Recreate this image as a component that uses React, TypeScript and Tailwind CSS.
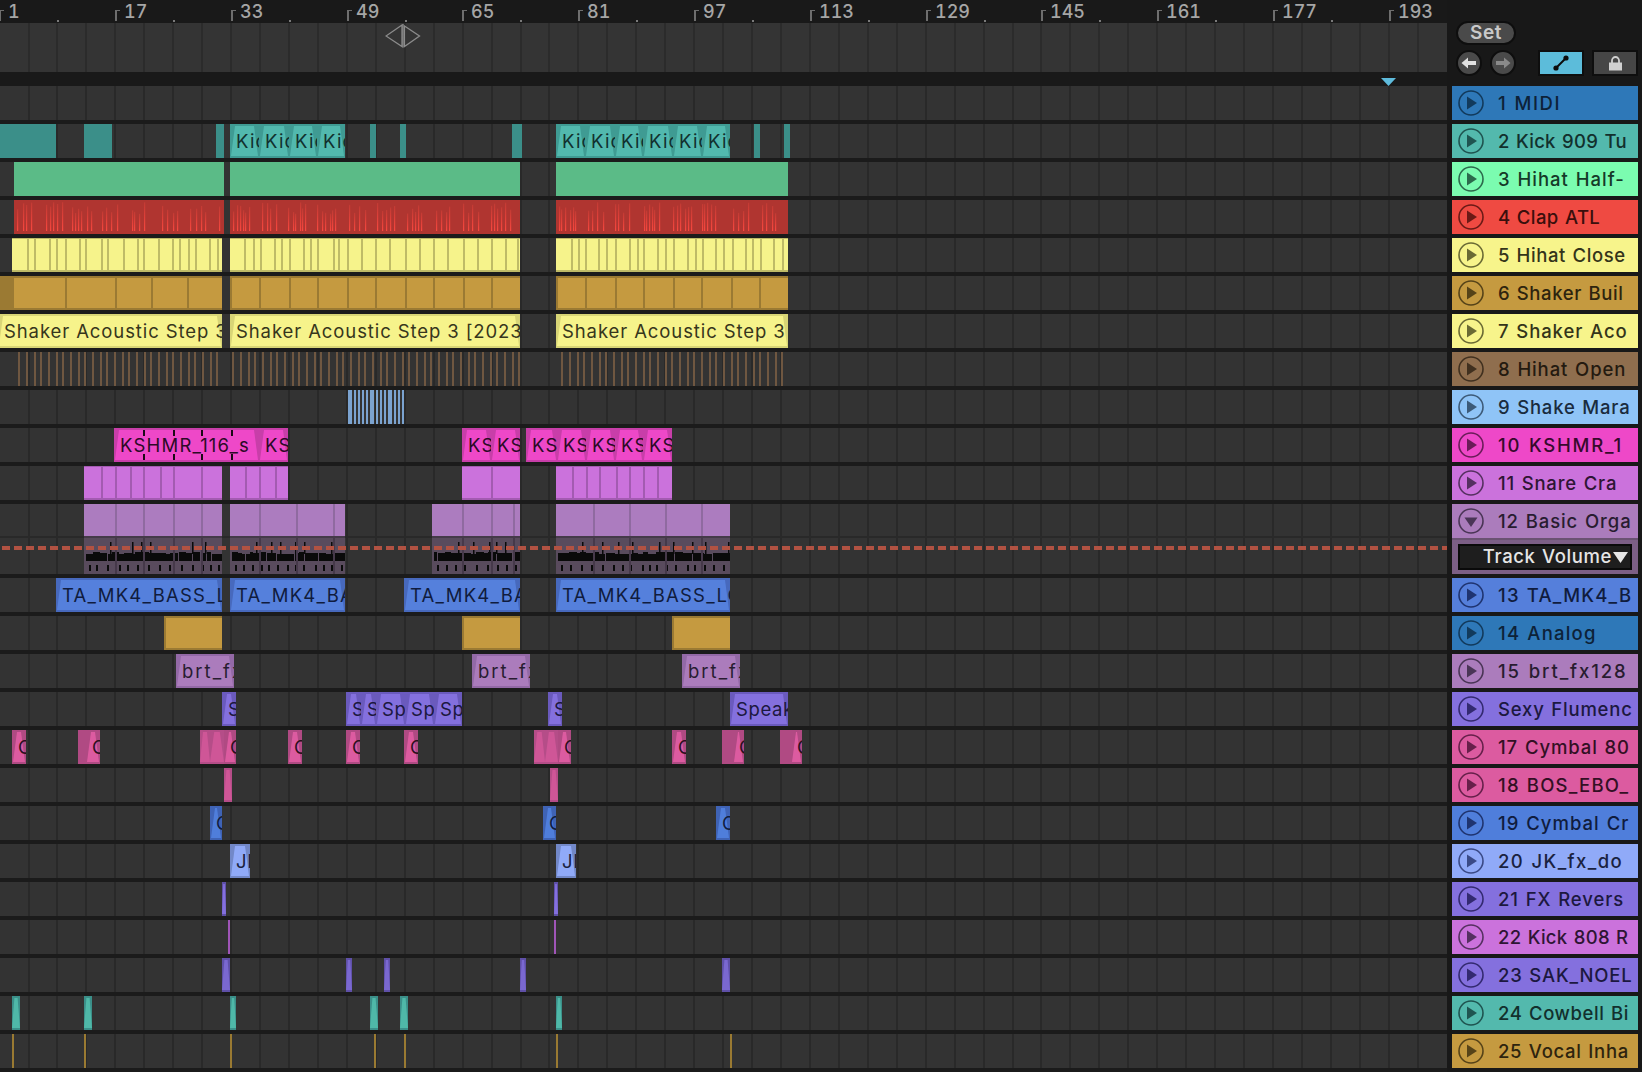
import React from "react";

const z = (v: number) => v / 2.851;
const y7 = (v: number) => 420 + v / 3;
const s6 = (v: number) => 500 + v / 3;

type Clip = {
  l: number;
  r: number;
  base: string;
  light?: string;
  narrow?: boolean;
  text?: string;
  ink?: string;
  tr?: string;
  divs?: number[];
  divCls?: string;
  frame?: string;
  ticks?: number[];
  dark?: number;
  darkCls?: string;
  spikes?: boolean;
};

const gridXs = Array.from({ length: 50 }, (_, k) => Math.round(-1.4 + k * 28.94)).filter((x) => x >= 0 && x < 1446);

function rng(seed: number) {
  let a = seed;
  return () => {
    a = (a + 0x6d2b79f5) | 0;
    let t = Math.imul(a ^ (a >>> 15), 1 | a);
    t = (t + Math.imul(t ^ (t >>> 7), 61 | t)) ^ t;
    return ((t ^ (t >>> 14)) >>> 0) / 4294967296;
  };
}

function Grid({ thin }: { thin?: boolean }) {
  return (
    <>
      {gridXs.map((x) => (
        <div
          key={x}
          className={thin ? "absolute inset-y-0 w-[2px] bg-[#2b2b2b]" : "absolute inset-y-0 w-[2px] bg-[#292929]"}
          style={{ left: x }}
        />
      ))}
    </>
  );
}

function Spikes({ w, seed }: { w: number; seed: number }) {
  const r = rng(seed);
  const items: { x: number; top: number }[] = [];
  let x = 3;
  while (x < w - 2) {
    const pos = x % 29;
    if (pos < 20) items.push({ x, top: 2 + r() * 12 });
    x += 2 + Math.round(r() * 4);
  }
  return (
    <svg className="absolute inset-0" width={w} height={34}>
      <defs>
        <linearGradient id={`sp${seed}`} x1="0" y1="0" x2="0" y2="1">
          <stop offset="0" stopColor="#c23b34" />
          <stop offset="0.45" stopColor="#dc3f38" />
          <stop offset="1" stopColor="#f8483f" />
        </linearGradient>
      </defs>
      {items.map((it, i) => (
        <rect key={i} x={it.x} y={it.top} width={1.2} height={31 - it.top} fill={`url(#sp${seed})`} />
      ))}
    </svg>
  );
}

function ClipView({ c, i }: { c: Clip; i: number }) {
  const left = Math.round(c.l);
  const width = Math.max(1, Math.round(c.r) - left);
  return (
    <div className={`absolute inset-y-0 overflow-hidden ${c.base}`} style={{ left, width }}>
      {c.light && (
        <div
          className={`absolute inset-x-0 top-[2px] bottom-[2px] ${c.light} ${
            c.narrow
              ? "[clip-path:polygon(30%_0,70%_0,100%_100%,0_100%)]"
              : "[clip-path:polygon(5px_0,calc(100%-5px)_0,calc(100%-1px)_100%,1px_100%)]"
          }`}
        />
      )}
      {c.dark !== undefined && <div className={`absolute inset-y-0 left-0 ${c.darkCls}`} style={{ width: c.dark }} />}
      {c.spikes && <Spikes w={width} seed={i * 37 + 11} />}
      {c.divs?.map((d, k) => (
        <div key={k} className={`absolute inset-y-0 w-[2px] ${c.divCls}`} style={{ left: Math.round(d) - left }} />
      ))}
      {c.frame && <div className={`absolute inset-0 ${c.frame}`} />}
      {c.ticks?.map((d, k) => (
        <React.Fragment key={k}>
          <div className="absolute top-[2px] h-[6px] w-[2px] bg-[#1a0a16]" style={{ left: Math.round(d) - left }} />
          <div className="absolute top-[26px] h-[6px] w-[2px] bg-[#1a0a16]" style={{ left: Math.round(d) - left }} />
        </React.Fragment>
      ))}
      {c.text && (
        <span
          className={`absolute left-[6px] right-0 top-0 overflow-hidden text-[18.5px] leading-[34px] whitespace-nowrap ${
            c.tr ?? "tracking-[0.6px]"
          } ${c.ink ?? "text-[#1e1e2a]"}`}
        >
          {c.text}
        </span>
      )}
    </div>
  );
}

const sec = (a: [number, number][], o: Partial<Clip> & { base: string }): Clip[] =>
  a.map(([l, r]) => ({ l, r, ...o }));

const three: [number, number][] = [
  [z(40), z(639)],
  [z(656), z(1482)],
  [556, 788],
];

const kickDark = "bg-[#3b8f89]";
const kick = { base: "bg-[#3f9b93]", light: "bg-[#52b9ae]", text: "Kick 909", ink: "text-[#11302e]", tr: "tracking-[1.2px]" };
const ks = { base: "bg-[#c83ea9]", light: "bg-[#ee48c8]", text: "KSHMR_116_s", ink: "text-[#2c0a26]", tr: "tracking-[1.2px]" };
const hihatOpen: [number, number][] = [];
for (const [a, b] of [
  [18, 222],
  [232, 520],
  [561, 790],
] as [number, number][]) {
  let x = a;
  let k = 0;
  while (x < b - 1) {
    hihatOpen.push([x, x + 2]);
    x += [8, 8, 6][k % 3];
    k++;
  }
}
const mara: [number, number][] = [
  [54, 66],
  [72, 78],
  [84, 90],
  [96, 102],
  [108, 114],
  [120, 132],
  [138, 144],
  [150, 156],
  [162, 168],
  [174, 186],
  [192, 198],
  [204, 210],
  [216, 222],
].map(([a, b]) => [330 + a / 3, 330 + b / 3]);

const yDivs1 = [76, 98, 140, 160, 185, 225, 243, 287, 305, 350, 392, 408, 450, 490, 510, 535, 555, 595, 620].map(z);
const yDivs2 = [
  695, 720, 740, 780, 800, 825, 865, 885, 905, 950, 965, 990, 1030, 1070, 1110, 1155, 1195, 1235, 1275, 1320, 1360,
  1400, 1440, 1475,
].map(z);
const yDivs3 = [
  212, 235, 255, 295, 318, 345, 388, 410, 428, 470, 495, 520, 560, 585, 605, 645, 668, 695, 735, 755, 780, 820, 845,
].map(s6);
const oDivs1 = [185, 328, 430, 533].map(z);
const oDivs2 = [738, 823, 904, 988, 1068, 1155, 1235, 1320, 1400].map(z);
const oDivs3 = [255, 345, 430, 520, 603, 693, 777].map(s6);

const yellow = {
  base: "bg-[#f6f38b]",
  divCls: "bg-[#bfbb67]",
  frame: "border-t border-b-2 border-[#bfbb67]",
};
const orange = {
  base: "bg-[#c59a40]",
  divCls: "bg-[#9b7a33]",
  frame: "border-t-2 border-b-2 border-[#9b7a33]",
};
const shaker = {
  base: "bg-[#d8d576]",
  light: "bg-[#f6f38b]",
  text: "Shaker Acoustic Step 3 [2023-01]",
  ink: "text-[#36361c]",
  tr: "tracking-[0.9px]",
};
const violet = { base: "bg-[#cb72dc]", divCls: "bg-[#a35bb1]", frame: "border-t border-b-2 border-[#a35bb1]" };
const blue = {
  base: "bg-[#4769bd]",
  light: "bg-[#5580dc]",
  text: "TA_MK4_BASS_LOOP",
  ink: "text-[#101c3e]",
  tr: "tracking-[1.2px]",
};
const gold = { base: "bg-[#c59a40]", frame: "border-2 border-r-0 border-[#9b7a33]" };
const brt = { base: "bg-[#9369a6]", light: "bg-[#ab7cbc]", text: "brt_fx128", ink: "text-[#281c30]", tr: "tracking-[2px]" };
const speak = { base: "bg-[#6a5abd]", light: "bg-[#8470de]", text: "Speak", ink: "text-[#1c1840]" };
const cym = { base: "bg-[#b04a83]", light: "bg-[#dc5ba0]", text: "Cymbal", ink: "text-[#2c0f20]" };
const cymB = { base: "bg-[#b54d88]", light: "bg-[#cf5697]", narrow: true };
const rowsData: Record<number, Clip[]> = {
  2: [
    ...sec(
      [
        [0, z(160)],
        [z(239), z(319)],
        [z(616), z(639)],
        [z(1055), z(1072)],
        [z(1140), z(1157)],
        [z(1460), z(1488)],
        [754, 760],
        [784, 790],
      ],
      { base: kickDark }
    ),
    ...sec(
      [
        [z(656), z(738)],
        [z(738), z(823)],
        [z(823), z(905)],
        [z(905), z(985)],
        [s6(168), s6(255)],
        [s6(255), s6(345)],
        [s6(345), s6(430)],
        [s6(430), s6(520)],
        [s6(520), s6(605)],
        [s6(605), s6(690)],
      ],
      kick
    ),
  ],
  3: sec(three, { base: "bg-[#5bbb87]" }),
  4: sec(three, { base: "bg-[#b03530]", spikes: true }),
  5: [
    { l: z(34), r: z(633), ...yellow, divs: yDivs1 },
    { l: z(656), r: z(1482), ...yellow, divs: yDivs2 },
    { l: 556, r: 788, ...yellow, divs: yDivs3 },
  ],
  6: [
    { l: 0, r: z(633), ...orange, divs: oDivs1, dark: 14, darkCls: "bg-[#9b7a33]" },
    { l: z(656), r: z(1482), ...orange, divs: oDivs2, frame: "border-2 border-r-0 border-[#9b7a33]" },
    { l: 556, r: 788, ...orange, divs: oDivs3, frame: "border-2 border-r-0 border-[#9b7a33]" },
  ],
  7: sec(
    [
      [-2, z(633)],
      [z(656), z(1482)],
      [556, 788],
    ],
    shaker
  ),
  8: sec(hihatOpen, { base: "bg-[#6f5741]" }),
  9: sec(mara, { base: "bg-[#7ba3d0]" }),
  10: [
    { l: z(325), r: z(738), ...ks, ticks: [408, 493, 573, 658].map(z) },
    ...sec(
      [
        [z(738), z(820)],
        [y7(126), y7(213)],
        [y7(213), y7(300)],
        [y7(318), y7(410)],
        [y7(410), y7(497)],
        [y7(497), y7(585)],
        [y7(585), y7(670)],
        [y7(670), y7(756)],
      ],
      ks
    ),
  ],
  11: [
    { l: z(239), r: z(633), ...violet, divs: [287, 328, 370, 408, 455, 493, 573].map(z) },
    { l: z(656), r: z(820), ...violet, divs: [698, 738, 783].map(z) },
    { l: y7(126), r: y7(300), ...violet, divs: [y7(213)] },
    { l: y7(408), r: y7(756), ...violet, divs: [455, 497, 538, 587, 628, 670, 712].map(y7) },
  ],
  13: sec(
    [
      [z(160), z(633)],
      [z(656), z(985)],
      [z(1152), z(1482)],
      [556, 730],
    ],
    blue
  ),
  14: sec(
    [
      [z(468), z(633)],
      [z(1317), z(1482)],
      [672, 730],
    ],
    gold
  ),
  15: sec(
    [
      [z(502), z(667)],
      [z(1346), z(1510)],
      [682, 740],
    ],
    brt
  ),
  16: sec(
    [
      [z(633), z(673)],
      [z(986), z(1030)],
      [z(1030), z(1071)],
      [z(1071), z(1155)],
      [z(1155), z(1236)],
      [z(1236), z(1317)],
      [548, 562],
      [730, 788],
    ],
    speak
  ),
  17: [
    ...sec(
      [
        [z(34), z(74)],
        [z(245), z(285)],
        [z(638), z(673)],
        [z(821), z(861)],
        [z(986), z(1026)],
        [z(1152), z(1192)],
        [558, 571],
        [672, 686],
        [733, 744],
        [791, 802],
      ],
      cym
    ),
    ...sec(
      [
        [z(222), z(245)],
        [722, 733],
        [780, 791],
      ],
      { base: "bg-[#b04a83]" }
    ),
    ...sec(
      [
        [z(570), z(598)],
        [z(598), z(638)],
        [534, 545],
        [545, 558],
      ],
      cymB
    ),
  ],
  18: sec(
    [
      [z(639), z(661)],
      [550, 558],
    ],
    cymB
  ),
  19: sec(
    [
      [z(599), z(633)],
      [543, 556],
      [716, 730],
    ],
    { base: "bg-[#3f63b5]", light: "bg-[#4f7edb]", text: "Cymbal", ink: "text-[#101c3e]" }
  ),
  20: sec(
    [
      [z(656), z(713)],
      [556, 576],
    ],
    { base: "bg-[#7288c8]", light: "bg-[#90aaf8]", text: "JK_fx", ink: "text-[#1a2240]" }
  ),
  21: sec(
    [
      [z(633), z(644)],
      [554, 558],
    ],
    { base: "bg-[#5f50a8]", light: "bg-[#8470de]", narrow: true }
  ),
  22: sec(
    [
      [z(650), z(656)],
      [554, 556],
    ],
    { base: "bg-[#a055b8]" }
  ),
  23: sec(
    [
      [z(633), z(656)],
      [z(986), z(1003)],
      [z(1095), z(1112)],
      [z(1482), z(1500)],
      [722, 730],
    ],
    { base: "bg-[#5f50a8]", light: "bg-[#7a68d0]", narrow: true }
  ),
  24: sec(
    [
      [z(34), z(57)],
      [z(239), z(262)],
      [z(656), z(673)],
      [z(1055), z(1078)],
      [z(1140), z(1163)],
      [556, 562],
    ],
    { base: "bg-[#3b8f89]", light: "bg-[#4fb8a8]", narrow: true }
  ),
  25: sec(
    [
      [z(34), z(40)],
      [z(239), z(245)],
      [z(656), z(661)],
      [z(1066), z(1072)],
      [z(1152), z(1157)],
      [556, 558],
      [730, 732],
    ],
    { base: "bg-[#9a7a32]" }
  ),
};

const tracks: { name: string; cls: string; ink: string; icon: string; tr?: string }[] = [
  { name: "1 MIDI", cls: "bg-[#2e78b8]", ink: "text-[#0d2238]", icon: "#123a5c", tr: "tracking-[1.5px]" },
  { name: "2 Kick 909 Tu", cls: "bg-[#53b9ad]", ink: "text-[#12302d]", icon: "#1f5450", tr: "tracking-[0.3px]" },
  { name: "3 Hihat Half-", cls: "bg-[#7bfcb0]", ink: "text-[#153a28]", icon: "#2c6a4c", tr: "tracking-[1px]" },
  { name: "4 Clap ATL", cls: "bg-[#ef4a42]", ink: "text-[#3a0f0c]", icon: "#6b1a16", tr: "tracking-[0.4px]" },
  { name: "5 Hihat Close", cls: "bg-[#f7f48b]", ink: "text-[#34341a]", icon: "#6a6a34" },
  { name: "6 Shaker Buil", cls: "bg-[#c59a40]", ink: "text-[#2e240e]", icon: "#564318" },
  { name: "7 Shaker Aco", cls: "bg-[#f7f48b]", ink: "text-[#34341a]", icon: "#6a6a34", tr: "tracking-[0.9px]" },
  { name: "8 Hihat Open", cls: "bg-[#8f6e4e]", ink: "text-[#241a10]", icon: "#40301f", tr: "tracking-[0.9px]" },
  { name: "9 Shake Mara", cls: "bg-[#8fc4f7]", ink: "text-[#1a2c3e]", icon: "#3c5a78", tr: "tracking-[0.8px]" },
  { name: "10 KSHMR_1", cls: "bg-[#ee48c8]", ink: "text-[#360a2c]", icon: "#6a1c58", tr: "tracking-[1.8px]" },
  { name: "11 Snare Cra", cls: "bg-[#cb72dc]", ink: "text-[#2e1534]", icon: "#553060", tr: "tracking-[0.8px]" },
  { name: "12 Basic Orga", cls: "bg-[#ab7cbc]", ink: "text-[#281c30]", icon: "#4a3556", tr: "tracking-[0.9px]" },
  { name: "13 TA_MK4_B", cls: "bg-[#557fdb]", ink: "text-[#101c3e]", icon: "#1f3470", tr: "tracking-[1.2px]" },
  { name: "14 Analog", cls: "bg-[#2e78b8]", ink: "text-[#0d2238]", icon: "#123a5c", tr: "tracking-[1.2px]" },
  { name: "15 brt_fx128", cls: "bg-[#ab7cbc]", ink: "text-[#281c30]", icon: "#4a3556", tr: "tracking-[1.9px]" },
  { name: "Sexy Flumenc", cls: "bg-[#8470de]", ink: "text-[#1c1840]", icon: "#332a70", tr: "tracking-[0.8px]" },
  { name: "17 Cymbal 80", cls: "bg-[#dc5ba0]", ink: "text-[#331024]", icon: "#66204a", tr: "tracking-[0.9px]" },
  { name: "18 BOS_EBO_", cls: "bg-[#dc5ba0]", ink: "text-[#331024]", icon: "#66204a", tr: "tracking-[1.2px]" },
  { name: "19 Cymbal Cr", cls: "bg-[#4f7edb]", ink: "text-[#101c3e]", icon: "#1f3470", tr: "tracking-[1px]" },
  { name: "20 JK_fx_do", cls: "bg-[#90aaf8]", ink: "text-[#1a2240]", icon: "#3a4a86", tr: "tracking-[1.4px]" },
  { name: "21 FX Revers", cls: "bg-[#8470de]", ink: "text-[#1c1840]", icon: "#332a70", tr: "tracking-[0.9px]" },
  { name: "22 Kick 808 R", cls: "bg-[#cb72dc]", ink: "text-[#2e1534]", icon: "#553060", tr: "tracking-[0.3px]" },
  { name: "23 SAK_NOEL", cls: "bg-[#8470de]", ink: "text-[#1c1840]", icon: "#332a70", tr: "tracking-[0.8px]" },
  { name: "24 Cowbell Bi", cls: "bg-[#53b9ad]", ink: "text-[#12302d]", icon: "#1f5450" },
  { name: "25 Vocal Inha", cls: "bg-[#c59a40]", ink: "text-[#2e240e]", icon: "#564318", tr: "tracking-[0.7px]" },
];

function PlayIcon({ color, down }: { color: string; down?: boolean }) {
  return (
    <svg width="26" height="26" viewBox="0 0 26 26" className="shrink-0">
      <circle cx="13" cy="13" r="12" fill="none" stroke={color} strokeWidth="1.6" />
      <path d={down ? "M6.5 9.5 H19.5 L13 19 Z" : "M9 6.5 L19 13 L9 19.5 Z"} fill={color} />
    </svg>
  );
}

const organ: { l: number; r: number; divs: number[] }[] = [
  { l: z(239), r: z(633), divs: [328, 407, 493, 573].map(z) },
  { l: z(656), r: z(985), divs: [738, 843, 948].map(z) },
  { l: y7(36), r: y7(300), divs: [y7(126), y7(213), y7(279)] },
  { l: 556, r: 730, divs: [520, 628, 736, 843].map(y7) },
];

function OrganClip({ l, r, divs, seed }: { l: number; r: number; divs: number[]; seed: number }) {
  const left = Math.round(l);
  const w = Math.round(r) - left;
  const rand = rng(seed);
  const band: { x: number; w: number; top: number }[] = [];
  for (let x = 2; x < w; ) {
    const bw = 3 + Math.round(rand() * 6);
    band.push({ x, w: bw, top: 14 + Math.round(rand() * 2) });
    x += bw + (rand() > 0.75 ? 1 : 0);
  }
  const spikes = [];
  for (let x = 26; x < w; x += 7 + Math.round(rand() * 22)) spikes.push(x);
  const low = [];
  for (let x = 5; x < w; x += 7 + Math.round(rand() * 5)) low.push(x);
  return (
    <div className="absolute inset-y-0 overflow-hidden flex flex-col" style={{ left, width: w }}>
      <div className="h-[32px] bg-[#ac7cbf] border-b-0" />
      <div className="h-[2px] bg-[#453a49]" />
      <div className="relative flex-1 bg-[#594b5d]">
        <svg className="absolute inset-0" width={w} height={36}>
          {band.map((b, i) => (
            <rect key={i} x={b.x} y={b.top} width={b.w} height={23 - b.top} fill="#0a0a0a" />
          ))}
          {spikes.map((x, i) => (
            <rect key={i} x={x} y={4} width={1.5} height={12} fill="#0a0a0a" />
          ))}
          {low.map((x, i) => (
            <rect key={i} x={x} y={27} width={2} height={6} fill="#0a0a0a" />
          ))}
        </svg>
      </div>
      {divs.map((d, k) => (
        <React.Fragment key={k}>
          <div className="absolute top-0 h-[32px] w-[2px] bg-[#8f6aa0]" style={{ left: Math.round(d) - left }} />
          <div className="absolute top-[34px] bottom-0 w-[2px] bg-[#46394a]" style={{ left: Math.round(d) - left }} />
        </React.Fragment>
      ))}
    </div>
  );
}

function Ruler() {
  const bars = Array.from({ length: 13 }, (_, i) => 1 + i * 16);
  return (
    <div className="relative h-[23px] bg-[#191919] overflow-hidden">
      {bars.map((b, i) => {
        const x = Math.round(-0.56 + i * 115.76);
        return (
          <React.Fragment key={b}>
            <div className="absolute top-[10px] h-[11px] w-[2px] bg-[#6e6e6e]" style={{ left: x }} />
            <div className="absolute top-[10px] h-[1px] w-[3px] bg-[#6e6e6e]" style={{ left: x + 2 }} />
            <span
              className="absolute top-0 text-[18px] leading-[23px] font-medium text-[#a6a6a6] tabular-nums"
              style={{ left: x + 9 }}
            >
              {b}
            </span>
            <div className="absolute top-[20px] h-[2px] w-[2px] bg-[#7a7a7a]" style={{ left: x + 58 }} />
          </React.Fragment>
        );
      })}
    </div>
  );
}

export default function App() {
  return (
    <div className="w-[1642px] h-[1072px] overflow-hidden flex bg-[#1b1b1b] [font-family:Inter,'Noto_Sans',sans-serif]">
      {/* arrangement */}
      <div className="w-[1447px] shrink-0 flex flex-col">
        <Ruler />
        <div className="relative h-[49px] bg-[#343434]">
          <Grid thin />
          <svg className="absolute left-[385px] top-[1px]" width="36" height="24" viewBox="0 0 36 24">
            <path d="M17 1 L1 12 L17 22.5 Z" fill="none" stroke="#8c8c8c" strokeWidth="1.3" />
            <path d="M19.5 2 L34.5 12 L19.5 22.5 Z" fill="none" stroke="#8c8c8c" strokeWidth="1.3" />
            <path d="M18 0 V23.5" stroke="#8c8c8c" strokeWidth="1.3" />
          </svg>
        </div>
        <div className="relative h-[14px] bg-[#191919]">
          <svg className="absolute left-[1381px] top-[6px]" width="15" height="8" viewBox="0 0 15 8">
            <path d="M0 0 H15 L7.5 8 Z" fill="#5ebbdc" />
          </svg>
        </div>
        <div className="flex flex-col gap-[4px]">
          {tracks.map((t, i) => {
            const n = i + 1;
            if (n === 12) {
              return (
                <div key={n} className="relative h-[70px] bg-[#333333]">
                  <Grid />
                  <div className="absolute inset-x-0 top-[32px] h-[2px] bg-[#292929]" />
                  {organ.map((o, k) => (
                    <OrganClip key={k} {...o} seed={k + 5} />
                  ))}
                  <div className="absolute left-[2px] right-0 top-[42px] h-[4px] bg-[repeating-linear-gradient(90deg,#b25242_0,#b25242_8px,transparent_8px,transparent_12px)]" />
                </div>
              );
            }
            return (
              <div key={n} className="relative h-[34px] bg-[#333333]">
                <Grid />
                {rowsData[n]?.map((c, k) => (
                  <ClipView key={k} c={c} i={n * 100 + k} />
                ))}
              </div>
            );
          })}
        </div>
      </div>

      {/* track headers */}
      <div className="flex-1 flex flex-col pl-[5px] bg-[#181818]">
        <div className="h-[86px] relative flex flex-col pt-[21px] pl-[4px] gap-[5px]">
          <div className="w-[60px] h-[24px] rounded-full bg-[#4a4a4a] border-2 border-[#0e0e0e] text-[#c9c9c9] text-[19px] leading-[20px] font-semibold tracking-[0.5px] text-center">
            Set
          </div>
          <div className="flex items-center h-[26px] gap-[8px]">
            <div className="w-[26px] h-[26px] rounded-full bg-[#4a4a4a] border-2 border-[#0e0e0e] flex items-center justify-center">
              <svg width="16" height="12" viewBox="0 0 16 12">
                <path d="M0.5 6 L7 0.5 V4 H15 V8 H7 V11.5 Z" fill="#e2e2e2" />
              </svg>
            </div>
            <div className="w-[26px] h-[26px] rounded-full bg-[#4a4a4a] border-2 border-[#0e0e0e] flex items-center justify-center">
              <svg width="16" height="12" viewBox="0 0 16 12">
                <path d="M15.5 6 L9 0.5 V4 H1 V8 H9 V11.5 Z" fill="#8a8a8a" />
              </svg>
            </div>
            <div className="ml-[14px] w-[46px] h-[26px] bg-[#5cbcda] border-2 border-[#0e0e0e] flex items-center justify-center">
              <svg width="16" height="16" viewBox="0 0 16 16">
                <path d="M3 13 L13 3" stroke="#0c0c0c" strokeWidth="2" />
                <circle cx="3" cy="13" r="2.6" fill="#0c0c0c" />
                <circle cx="13" cy="3" r="2.6" fill="#0c0c0c" />
              </svg>
            </div>
            <div className="w-[46px] h-[26px] bg-[#464646] border-2 border-[#0e0e0e] flex items-center justify-center">
              <svg width="15" height="15" viewBox="0 0 15 15">
                <path d="M4 7 V4.5 a3.5 3.5 0 0 1 7 0 V7" fill="none" stroke="#d0d0d0" strokeWidth="1.8" />
                <rect x="1" y="6.5" width="13" height="8" fill="#d0d0d0" />
              </svg>
            </div>
          </div>
        </div>
        <div className="flex flex-col gap-[4px]">
          {tracks.map((t, i) => (
            <div key={t.name} className="w-[186px] flex flex-col">
              <div className={`h-[34px] flex items-center pl-[6px] gap-[14px] overflow-hidden ${t.cls}`}>
                <PlayIcon color={t.icon} down={i === 11} />
                <span
                  className={`pt-[2px] text-[18.5px] font-medium [word-spacing:1px] whitespace-nowrap ${
                    t.tr ?? "tracking-[0.6px]"
                  } ${t.ink}`}
                >
                  {t.name}
                </span>
              </div>
              {i === 11 && (
                <div className="h-[36px] bg-[#7c5f86] flex items-center justify-center border-t-2 border-[#6a5272]">
                  <div className="w-[174px] h-[26px] border-2 border-[#0a0a0a] bg-[#1e1e1e] flex items-center justify-end pr-[2px] gap-[1px]">
                    <span className="pb-[3px] text-[18.5px] leading-[20px] font-medium tracking-[0.6px] [word-spacing:1px] text-[#e6e6e6] whitespace-nowrap">
                      Track Volume
                    </span>
                    <svg width="15" height="11" viewBox="0 0 15 11" className="shrink-0">
                      <path d="M0 0 H15 L7.5 11 Z" fill="#e6e6e6" />
                    </svg>
                  </div>
                </div>
              )}
            </div>
          ))}
        </div>
      </div>
    </div>
  );
}
